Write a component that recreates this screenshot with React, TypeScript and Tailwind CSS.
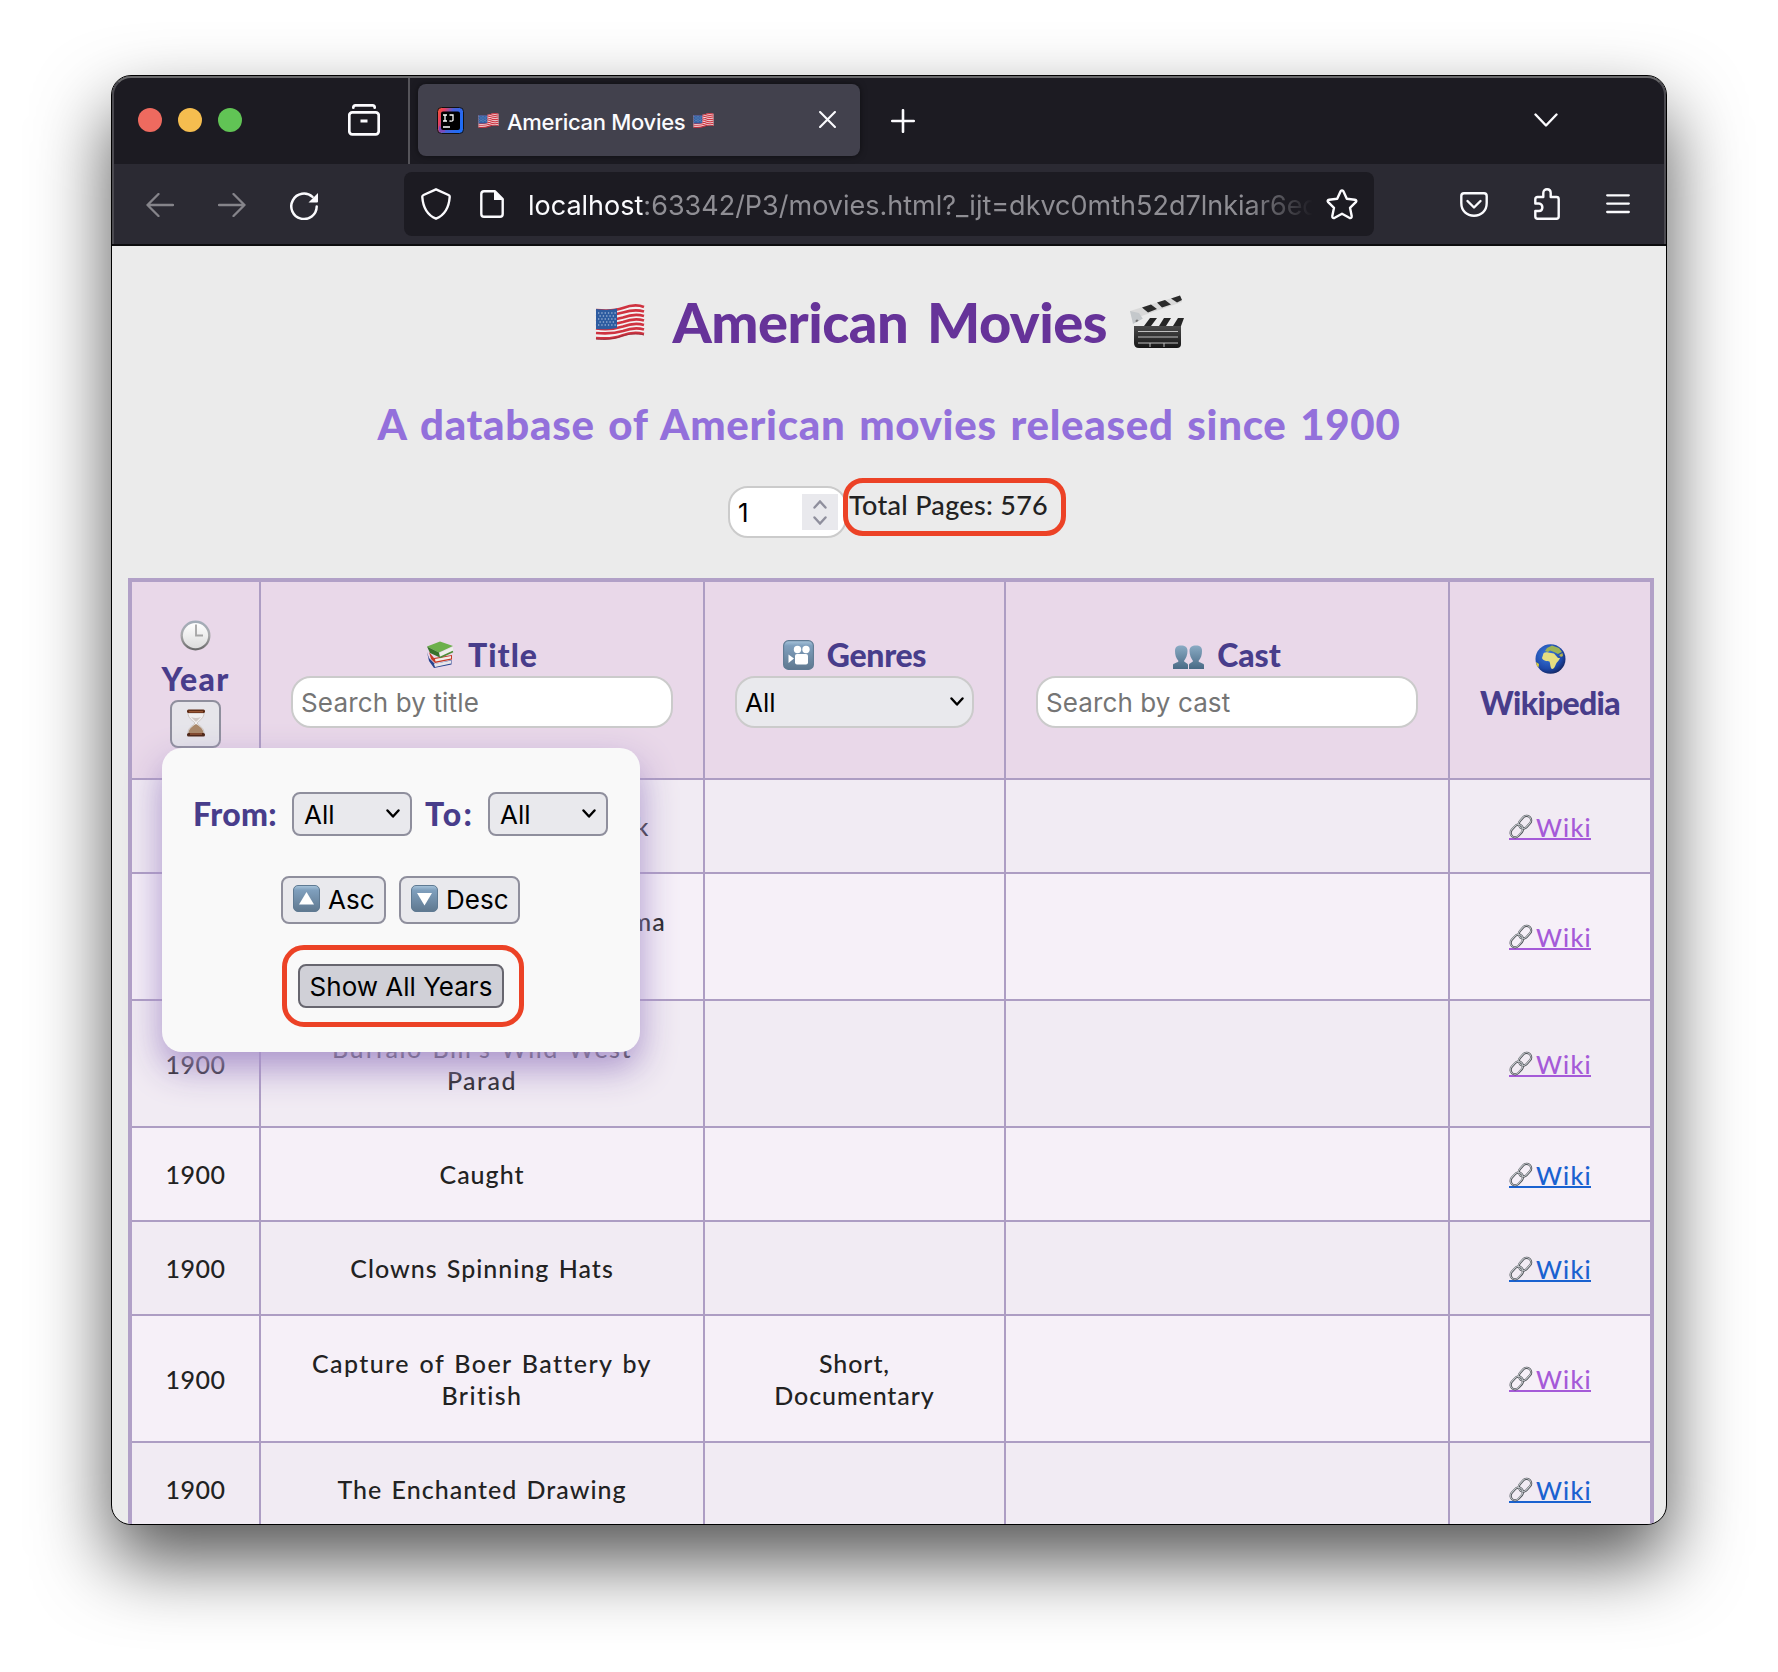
import React from "react";

function Flag({ className }: { className: string }) {
  return (
    <svg viewBox="0 0 50 36" className={className}>
      <path d="M1 5C12 6 20 6 28 3C36 0 44 0 49 2V31C42 29 34 30 27 32C19 35 10 36 1 35Z" fill="#f4f1f2" />
      <g fill="none" stroke="#cf3340" strokeWidth="2.7">
        <path d="M1 6C12 7 20 7 28 4C36 1 44 1 49 3" />
        <path d="M1 11C12 12 20 11 28 8.500C36 6 44 6 49 7.500" />
        <path d="M1 15.500C12 17 20 16 28 13.500C36 10.500 44 10.500 49 12" />
        <path d="M1 20C12 21.500 20 20.500 28 18C36 15 44 15 49 16.500" />
        <path d="M1 24.500C12 26 20 25 28 22.500C36 19.500 44 19.500 49 21" />
        <path d="M1 29C12 30 20 29.500 28 27C36 24 44 24 49 25.500" />
        <path d="M1 34C12 35 20 34.500 27 31.500C35 28.500 43 28.500 49 30" />
      </g>
      <path d="M1 5C9 6 16 6 22 4.500V24C15 25.500 8 25.500 1 25Z" fill="#2d5ca0" />
      <path d="M3 9H21M4.500 12H21M3 15H21M4.500 18H21M3 21H21" stroke="#c9d8ec" strokeWidth="1.200" strokeDasharray="1.300 2" />
      <path d="M1 35C10 36 19 35 27 32C34 30 42 29 49 31" fill="none" stroke="#8d2836" strokeWidth="0.800" />
    </svg>
  );
}

function Clapper() {
  return (
    <svg viewBox="0 0 54 54" className="w-[54px] h-[54px]">
      <defs>
        <linearGradient id="slate" x1="0" y1="0" x2="0" y2="1">
          <stop offset="0" stopColor="#4a4a4a" />
          <stop offset="1" stopColor="#161616" />
        </linearGradient>
      </defs>
      <path d="M0 16L50 0.500L52 7L3 24Z" fill="#d9d9d9" />
      <path d="M12 12.500L21 9.500L27 14L18 17.500ZM27 7.500L35 5L41 9.500L32 12.500ZM41 3.500L50 0.500L52 5L47 7.500Z" fill="#2b2b2b" />
      <path d="M0 16L3 29L15 27L9 18Z" fill="#c4c8cb" />
      <circle cx="7" cy="26" r="1.500" fill="#777" />
      <path d="M3 29L14 23H54L51 31H4Z" fill="#ececec" />
      <path d="M20 23H27L21 31H14ZM34 23H41L36 31H29ZM48 23H54L51 31H43Z" fill="#262626" />
      <path d="M4 31H51V49Q51 53 47 53H9Q4 53 4 48Z" fill="url(#slate)" />
      <path d="M8 36.500H48M8 42H48M8 48H48M20 48V52M34 48V52" stroke="#bdbdbd" strokeWidth="1" fill="none" />
    </svg>
  );
}

function Clock() {
  return (
    <svg viewBox="0 0 31 31" className="w-[31px] h-[31px]">
      <defs>
        <linearGradient id="rim" x1="0" y1="0" x2="0" y2="1">
          <stop offset="0" stopColor="#a3adba" />
          <stop offset="0.500" stopColor="#a9a9ab" />
          <stop offset="1" stopColor="#666" />
        </linearGradient>
        <linearGradient id="face" x1="0" y1="0" x2="0" y2="1">
          <stop offset="0" stopColor="#fff" />
          <stop offset="1" stopColor="#dcdcdc" />
        </linearGradient>
      </defs>
      <circle cx="15.500" cy="15.500" r="15" fill="url(#rim)" />
      <circle cx="15.500" cy="15.700" r="12.600" fill="url(#face)" />
      <path d="M16 4.500V15.500H23" fill="none" stroke="#a5a5a5" strokeWidth="1.800" />
    </svg>
  );
}

function Hourglass() {
  return (
    <svg viewBox="0 0 20 28" className="w-[20px] h-[28px]">
      <path d="M2 4H18C18 9 14 11 11.500 13.500V15C14 17 18 19 18 24H2C2 19 6 17 8.500 15V13.500C6 11 2 9 2 4Z" fill="#f1efef" stroke="#c3bcb8" strokeWidth="0.800" />
      <path d="M10 15C13 17 17 19 17.500 24H2.500C3 19 7 17 10 15Z" fill="#a98768" />
      <path d="M5 8Q10 10 15 8L10.500 12.500H9.500Z" fill="#d0c8c4" />
      <rect x="1" y="0.500" width="18" height="3.500" rx="1.500" fill="#5d2c16" />
      <path d="M3 2.800H17" stroke="#b36a42" strokeWidth="1" />
      <rect x="1" y="24" width="18" height="3.500" rx="1.500" fill="#4c2413" />
      <path d="M4 25H16" stroke="#b36a42" strokeWidth="1" />
    </svg>
  );
}

function Books() {
  return (
    <svg viewBox="0 0 28 28" className="w-[28px] h-[28px]">
      <path d="M1 11L3 20L8 27L25.500 23.500V19L9 23L3 17Z" fill="#28448f" />
      <path d="M8 23L25 19.500V22.500L9 26Z" fill="#e6e6ea" />
      <path d="M3 11L5 18L9 22L26 18.500V14L8 17Z" fill="#c43a26" />
      <path d="M9 18L25 15V17.500L9.500 20.500Z" fill="#f1ece8" />
      <path d="M1 5.500L14 0.500L27 5L13 11.500Z" fill="#6cb04b" />
      <path d="M1 5.500L13 11.500L14 16.500L4 12Z" fill="#37722a" />
      <path d="M13.500 12L27 6V10L14.500 16Z" fill="#eef0ea" />
      <path d="M14 16.500L27 10.500" stroke="#4d8c38" strokeWidth="1.500" />
    </svg>
  );
}

function TileDefs() {
  return (
    <svg className="absolute w-0 h-0">
      <defs>
        <linearGradient id="tile" x1="0" y1="0" x2="0" y2="1">
          <stop offset="0" stopColor="#a9c6dc" />
          <stop offset="0.180" stopColor="#7f9fbd" />
          <stop offset="1" stopColor="#5f788f" />
        </linearGradient>
        <linearGradient id="bust" x1="0" y1="0" x2="0" y2="1">
          <stop offset="0" stopColor="#8aabc4" />
          <stop offset="1" stopColor="#496a85" />
        </linearGradient>
        <radialGradient id="sea" cx="0.400" cy="0.350" r="0.700">
          <stop offset="0" stopColor="#3c7be0" />
          <stop offset="0.700" stopColor="#1d48a8" />
          <stop offset="1" stopColor="#14245c" />
        </radialGradient>
      </defs>
    </svg>
  );
}

function Cinema() {
  return (
    <svg viewBox="0 0 31 30" className="w-[31px] h-[30px]">
      <rect x="0.600" y="0.600" width="29.800" height="28.800" rx="5" fill="url(#tile)" stroke="#5f7a93" strokeWidth="1.100" />
      <circle cx="14.500" cy="9.500" r="3.700" fill="#fff" />
      <circle cx="23" cy="9.500" r="3.700" fill="#fff" />
      <rect x="12" y="14" width="13" height="10.500" rx="2" fill="#fff" />
      <path d="M5.500 14.500L11 18.500L5.500 23Z" fill="#fff" />
    </svg>
  );
}

function Busts() {
  return (
    <svg viewBox="0 0 31 24" className="w-[31px] h-[24px]">
      <path d="M0 24V20C0 18 5 18 5.500 16C3 13 2 10 2 6C2 2 4 0.500 8 0.500C12 0.500 14.500 2 14.500 6C14.500 10 13 13 11 16C12 18 15 18 15 20V24Z" fill="url(#bust)" />
      <path d="M31 24V20C31 18 26 18 25.500 16C28 13 29 10 29 6C29 2 27 0.500 23 0.500C19 0.500 16.500 2 16.500 6C16.500 10 18 13 20 16C19 18 16 18 16 20V24Z" fill="url(#bust)" />
    </svg>
  );
}

function Globe() {
  return (
    <svg viewBox="0 0 31 30" className="w-[31px] h-[30px]">
      <ellipse cx="15.500" cy="15" rx="15" ry="14.700" fill="url(#sea)" />
      <path d="M8 11C8 8.500 11 8 13 8.500L19 9.500L23 14H25C24 17 21.500 18 21 20C20 23 18.500 25 17 25C15 24 15.500 20 14.500 17.500C12 17 8 17 7 14Z" fill="#e6de80" />
      <path d="M10 7L12 4L17 1.500L24 4L27 8L23 10L19 8L15 6.500L13 8Z" fill="#9db356" />
      <path d="M1 18L4 20L3.500 23.500L1.800 21.500Z" fill="#d8cb3a" />
      <path d="M24 11L27.500 9L28 12L26 13Z" fill="#b6b14c" />
    </svg>
  );
}

function Chain() {
  return (
    <svg viewBox="0 0 24 25" className="w-[24px] h-[25px]">
      <g fill="none" strokeLinecap="round">
        <rect x="-4.500" y="-7" width="9" height="14" rx="4.500" transform="translate(7.800 17) rotate(42)" stroke="#4b4f54" strokeWidth="2.200" />
        <rect x="-4.500" y="-7" width="9" height="14" rx="4.500" transform="translate(16 8.200) rotate(42)" stroke="#4b4f54" strokeWidth="2.200" />
        <rect x="-4.500" y="-7" width="9" height="14" rx="4.500" transform="translate(7.600 16.800) rotate(42)" stroke="#c8ccd0" strokeWidth="1" />
        <rect x="-4.500" y="-7" width="9" height="14" rx="4.500" transform="translate(15.800 8) rotate(42)" stroke="#c8ccd0" strokeWidth="1" />
      </g>
    </svg>
  );
}

function ArrowTile({ down = false }: { down?: boolean }) {
  return (
    <svg viewBox="0 0 27 27" className="w-[27px] h-[27px] mb-[3px]">
      <rect x="0.500" y="0.500" width="26" height="26" rx="4.500" fill="url(#tile)" stroke="#5f7a93" />
      <path d={down ? "M6 8H21L13.500 20.500Z" : "M6 19.500H21L13.500 7Z"} fill="#fff" />
    </svg>
  );
}

function Chevron() {
  return (
    <svg viewBox="0 0 14 10" className="w-[14px] h-[10px]">
      <path d="M1.500 1.500L7 7.500L12.500 1.500" fill="none" stroke="#000" strokeWidth="2.400" strokeLinecap="round" strokeLinejoin="round" />
    </svg>
  );
}

function TabBar() {
  return (
    <div className="flex items-center h-[88px] bg-[#1c1b22]">
      <div className="flex gap-4 ml-[26px]">
        <div className="size-6 rounded-full bg-[#ee6a5f]" />
        <div className="size-6 rounded-full bg-[#f5bd4f]" />
        <div className="size-6 rounded-full bg-[#61c455]" />
      </div>
      <svg viewBox="0 0 32 32" className="w-[32px] h-[32px] ml-[106px]" fill="none" stroke="#fbfbfe" strokeWidth="2.700" strokeLinecap="round">
        <path d="M5.300 3.700C5.300 2.300 6 1.400 7.500 1.400H24.500C26 1.400 26.700 2.300 26.700 3.700" />
        <rect x="1.300" y="8.300" width="29.400" height="22" rx="3" />
        <path d="M12.500 17H19.500" strokeWidth="3" strokeLinecap="butt" />
      </svg>
      <div className="w-[2px] h-[88px] bg-[#55545a] ml-[28px]" />
      <div className="flex items-center w-[442px] h-[72px] ml-2 rounded-lg bg-[#42414d] shadow-[0_0_6px_rgba(0,0,0,0.5)]">
        <svg viewBox="0 0 27 27" className="w-[27px] h-[27px] ml-[19px]">
          <defs>
            <linearGradient id="ij" x1="0" y1="0" x2="1" y2="0.400">
              <stop offset="0" stopColor="#f9592f" />
              <stop offset="0.250" stopColor="#e8405f" />
              <stop offset="0.550" stopColor="#4b5fd6" />
              <stop offset="1" stopColor="#1f6cf5" />
            </linearGradient>
          </defs>
          <rect x="0.500" y="0.500" width="26" height="26" rx="4" fill="url(#ij)" stroke="#111" />
          <path d="M2 19L8 23V25H4Q2 25 2 22Z" fill="#7a4ab8" />
          <rect x="4" y="4.500" width="19" height="18.500" rx="2" fill="#000" />
          <path d="M6 8H10M8 8V14M6 14H10M12.500 8H16V13Q16 14.500 12.500 14M6 20H13" stroke="#fff" strokeWidth="1.300" fill="none" />
        </svg>
        <Flag className="w-[21px] h-[15px] ml-[14px]" />
        <span className="font-['Inter'] font-medium text-[22px] leading-7 tracking-[-0.3px] text-[#fbfbfe] w-[178px] ml-[8px] mt-[3px] whitespace-nowrap">American Movies</span>
        <Flag className="w-[21px] h-[15px] ml-[8px]" />
        <svg viewBox="0 0 16 16" className="w-[17px] h-[17px] ml-[105px] mb-[1px]">
          <path d="M1 1L15 15M15 1L1 15" stroke="#fbfbfe" strokeWidth="2" strokeLinecap="round" />
        </svg>
      </div>
      <svg viewBox="0 0 24 24" className="w-[24px] h-[24px] ml-[31px] mt-[2px]">
        <path d="M1.200 12H22.800M12 1.200V22.800" stroke="#fbfbfe" strokeWidth="2.600" strokeLinecap="round" />
      </svg>
      <svg viewBox="0 0 24 14" className="w-[24px] h-[14px] ml-[619px] mb-[1px]">
        <path d="M1.500 1.500L12 12.500L22.500 1.500" fill="none" stroke="#fbfbfe" strokeWidth="2.400" strokeLinecap="round" strokeLinejoin="round" />
      </svg>
    </div>
  );
}

function NavBar() {
  return (
    <div className="flex items-center h-[82px] bg-[#2b2a33] border-b-2 border-[#0c0c0e]">
      <svg viewBox="0 0 28 24" className="w-[28px] h-[24px] ml-[34px] mt-[2px]" fill="none" stroke="#85848a" strokeWidth="2.300" strokeLinecap="round" strokeLinejoin="round">
        <path d="M27 12H1.500M12.500 1L1.500 12L12.500 23" />
      </svg>
      <svg viewBox="0 0 28 24" className="w-[28px] h-[24px] ml-[44px] mt-[2px]" fill="none" stroke="#85848a" strokeWidth="2.300" strokeLinecap="round" strokeLinejoin="round">
        <path d="M1 12H26.500M15.500 1L26.500 12L15.500 23" />
      </svg>
      <svg viewBox="0 0 28 28" className="w-[28px] h-[28px] ml-[44px] mt-[3px]">
        <path d="M26.700 14.500A12.700 12.700 0 1 1 22.500 4.900" fill="none" stroke="#fbfbfe" strokeWidth="2.500" strokeLinecap="round" />
        <path d="M28 1V9.500Q28 10.500 27 10.500H18.500Z" fill="#fbfbfe" />
      </svg>
      <div className="flex items-center w-[970px] h-[64px] ml-[86px] pl-[17px] rounded-lg bg-[#1c1b22]">
        <svg viewBox="0 0 30 32" className="w-[30px] h-[32px]" fill="none" stroke="#fbfbfe" strokeWidth="2.400" strokeLinejoin="round">
          <path d="M15 1.300L27.500 7C28.400 7.400 28.800 8 28.700 9C28 19 24 27 15 30.700C6 27 2 19 1.300 9C1.200 8 1.600 7.400 2.500 7Z" />
        </svg>
        <svg viewBox="0 0 24 28" className="w-[24px] h-[28px] ml-[29px]">
          <path d="M15 1.300H4Q1.300 1.300 1.300 4V24Q1.300 26.700 4 26.700H20Q22.700 26.700 22.700 24V9Z" fill="none" stroke="#fbfbfe" strokeWidth="2.400" strokeLinejoin="round" />
          <path d="M14 1V10H23.500Z" fill="#fbfbfe" />
        </svg>
        <div className="w-[785px] ml-[24px] mr-[1px] mt-[3px] overflow-hidden whitespace-nowrap font-['Inter'] text-[27px] leading-9 text-[#8f8e94] [mask-image:linear-gradient(to_right,black_720px,transparent_785px)]">
          <span className="text-[#fbfbfe]">localhost</span>:63342/P3/movies.html?_ijt=dkvc0mth52d7lnkiar6ed
        </div>
        <svg viewBox="0 0 32 31" className="w-[32px] h-[31px] ml-[12px]" fill="none" stroke="#fbfbfe" strokeWidth="2.400" strokeLinejoin="round">
          <path d="M14.600 2.200Q16 0.500 17.400 2.200L20.800 9.800L28.800 10.700Q31.300 11.200 29.800 13.200L24 18.800L25.700 27Q25.800 29.800 23.300 28.800L16 24.800L8.700 28.800Q6.200 29.800 6.300 27L8 18.800L2.200 13.200Q0.700 11.200 3.200 10.700L11.200 9.800Z" />
        </svg>
      </div>
      <svg viewBox="0 0 28 25" className="w-[28px] h-[25px] ml-[86px]" fill="none" stroke="#fbfbfe" strokeWidth="2.400" strokeLinecap="round" strokeLinejoin="round">
        <path d="M4 1.300H24Q26.700 1.300 26.700 4V11C26.700 19 21 23.700 14 23.700C7 23.700 1.300 19 1.300 11V4Q1.300 1.300 4 1.300Z" />
        <path d="M7.500 9L14 15.500L20.500 9" />
      </svg>
      <svg viewBox="0 0 26 32" className="w-[26px] h-[32px] ml-[46px]" fill="none" stroke="#fbfbfe" strokeWidth="2.400" strokeLinejoin="round">
        <path d="M9.300 9V5C9.300 0 16.700 0 16.700 5V9H22.500Q24.700 9 24.700 11.200V28.500Q24.700 30.700 22.500 30.700H3.500Q1.300 30.700 1.300 28.500V23H5C9.500 23 9.500 15.500 5 15.500H1.300V11.200Q1.300 9 3.500 9Z" />
      </svg>
      <svg viewBox="0 0 24 20" className="w-[24px] h-[20px] ml-[46px]" stroke="#fbfbfe" strokeWidth="2.300" strokeLinecap="round">
        <path d="M1.200 1.300H22.800M1.200 9.600H22.800M1.200 18H22.800" />
      </svg>
    </div>
  );
}

type Row = { title: string[]; genres?: string[]; visited: boolean; tall?: boolean; spacing?: string };

const rows: Row[] = [
  { title: ["After Dark in Central Park"], visited: true, spacing: "tracking-[1.7px]" },
  { title: ["Boarding School Girls' Pajama", "Parade"], visited: true, tall: true, spacing: "tracking-[1.25px]" },
  { title: ["Buffalo Bill's Wild West", "Parad"], visited: true, tall: true, spacing: "tracking-[1.5px]" },
  { title: ["Caught"], visited: false },
  { title: ["Clowns Spinning Hats"], visited: false },
  { title: ["Capture of Boer Battery by", "British"], genres: ["Short,", "Documentary"], visited: true, tall: true, spacing: "tracking-[1.4px]" },
  { title: ["The Enchanted Drawing"], visited: false },
];

const columns = "grid grid-cols-[129px_444px_301px_444px_200px]";
const cell = "flex flex-col items-center justify-center border-b-2 border-[#ad9dc3] whitespace-nowrap";
const field = "flex items-center h-[52px] rounded-[20px] border-2 border-[#cbcbcb] font-['Inter'] text-[26px] font-normal";
const heading = "font-['Lato'] font-black text-[32px] leading-[38px] text-[#483d8b]";
const control = "flex items-center rounded-lg border-2 border-[#8f8f9d] bg-[#e9e9ed] font-['Inter'] text-[26px] text-black whitespace-nowrap";

function HeaderRow() {
  return (
    <div className={`${columns} h-[198px] bg-[#e9d8e9]`}>
      <div className="flex flex-col items-center border-r-2 border-b-2 border-[#ad9dc3] pt-[38px]">
        <Clock />
        <div className={`${heading} mt-[9px] tracking-[1.3px]`}>Year</div>
        <div className="flex justify-center w-[51px] h-[48px] mt-[2px] pt-[7px] rounded-lg border-2 border-[#8f8f9d] bg-[#e6e5ea]">
          <Hourglass />
        </div>
      </div>
      <div className="flex flex-col items-center border-r-2 border-b-2 border-[#ad9dc3] pt-[54px]">
        <div className="flex items-center h-[38px]">
          <Books />
          <span className={`${heading} ml-[14px] tracking-[1px]`}>Title</span>
        </div>
        <div className={`${field} w-[382px] mt-[2px] pl-[8px] bg-white text-[#757575] tracking-[0.15px]`}>Search by title</div>
      </div>
      <div className="flex flex-col items-center border-r-2 border-b-2 border-[#ad9dc3] pt-[54px]">
        <div className="flex items-center h-[38px]">
          <Cinema />
          <span className={`${heading} ml-[13px] tracking-[-0.3px]`}>Genres</span>
        </div>
        <div className={`${field} justify-between w-[239px] mt-[2px] pl-[8px] pr-[8px] bg-[#e9e9ed] text-black`}>
          All
          <Chevron />
        </div>
      </div>
      <div className="flex flex-col items-center border-r-2 border-b-2 border-[#ad9dc3] pt-[54px]">
        <div className="flex items-center h-[38px]">
          <div className="mt-[4px]"><Busts /></div>
          <span className={`${heading} ml-[13px]`}>Cast</span>
        </div>
        <div className={`${field} w-[382px] mt-[2px] pl-[8px] bg-white text-[#757575] tracking-[0.1px]`}>Search by cast</div>
      </div>
      <div className="flex flex-col items-center border-b-2 border-[#ad9dc3] pt-[62px]">
        <Globe />
        <div className={`${heading} mt-[10px] tracking-[-0.7px]`}>Wikipedia</div>
      </div>
    </div>
  );
}

function MovieRow({ row, odd }: { row: Row; odd: boolean }) {
  return (
    <div className={`${columns} ${row.tall ? "h-[127px]" : "h-[94px]"} ${odd ? "bg-[#f1ebf3]" : "bg-[#f6f0f8]"} font-['Lato'] text-[25px] font-medium leading-8 [word-spacing:2px] text-[#222]`}>
      <div className={`${cell} border-r-2 tracking-[0.5px]`}>1900</div>
      <div className={`${cell} border-r-2 ${row.spacing ?? "tracking-[1px]"}`}>
        {row.title.map((line) => <div key={line}>{line}</div>)}
      </div>
      <div className={`${cell} border-r-2 tracking-[0.9px]`}>
        {row.genres?.map((line) => <div key={line}>{line}</div>)}
      </div>
      <div className={`${cell} border-r-2`} />
      <div className={cell}>
        <div className={`flex h-[29px] border-b-2 ${row.tall ? "mt-[-3px]" : "mt-[-1px]"} ${row.visited ? "text-[#a55ad8] border-[#a55ad8]" : "text-[#1a62d0] border-[#1a62d0]"}`}>
          <div className="pt-[3px]"><Chain /></div>
          <span className="ml-[3px] w-[55px] tracking-[1.2px]">Wiki</span>
        </div>
      </div>
    </div>
  );
}

function YearPopup() {
  return (
    <div className="absolute left-[50px] top-[502px] w-[478px] h-[304px] rounded-[20px] bg-[#f9f9f9] shadow-[0_16px_36px_rgba(165,142,200,0.95)]">
      <div className="flex items-center h-[44px] mt-[44px] pl-[31px]">
        <span className={`${heading} w-[99px] tracking-[0.3px]`}>From:</span>
        <div className={`${control} justify-between w-[120px] h-[44px] pl-[10px] pr-[10px]`}>All<Chevron /></div>
        <span className={`${heading} w-[62px] pl-[13px] tracking-[2.2px]`}>To:</span>
        <div className={`${control} justify-between w-[120px] h-[44px] ml-[14px] pl-[10px] pr-[10px]`}>All<Chevron /></div>
      </div>
      <div className="flex mt-[40px] pl-[119px] gap-[13px]">
        <div className={`${control} w-[105px] h-[48px] pl-[10px] gap-[8px]`}><ArrowTile /><span className="mb-[1px]">Asc</span></div>
        <div className={`${control} w-[121px] h-[48px] pl-[10px] gap-[8px]`}><ArrowTile down /><span className="mb-[1px]">Desc</span></div>
      </div>
      <div className="flex items-center justify-center w-[206px] h-[44px] mt-[40px] ml-[136px] rounded-lg border-2 border-[#67666f] bg-[#d0d0d7] font-['Inter'] text-[26px] text-black whitespace-nowrap">
        Show All Years
      </div>
      <div className="absolute left-[120px] top-[197px] w-[242px] h-[82px] rounded-[22px] border-[5px] border-[#ec4226]" />
    </div>
  );
}

export default function App() {
  return (
    <div className="w-[1778px] h-[1672px] overflow-hidden bg-white pt-[75px] pl-[111px]">
      <div className="relative w-[1556px] h-[1450px] rounded-[20px] border border-black bg-[#ebebeb] overflow-hidden shadow-[0_36px_74px_rgba(0,0,0,0.67)]">
        <TileDefs />
        <TabBar />
        <NavBar />
        <div className="absolute left-0 top-0 w-full h-[168px] rounded-t-[19px] border-t-2 border-x-2 border-t-[#6a6a6c] border-x-[#4b4a50]" />
        <div className="relative h-[1278px]">
          <h1 className="flex justify-center pt-[41px]">
            <Flag className="w-[50px] h-[36px] mt-[17px]" />
            <span className="w-[433px] ml-[28px] mt-[1px] whitespace-nowrap font-['Lato'] font-black text-[56px] leading-[67px] tracking-[-0.5px] [word-spacing:6px] text-[#663399]">American Movies</span>
            <div className="ml-[24px] mt-[8px]"><Clapper /></div>
          </h1>
          <h2 className="mt-[44px] text-center whitespace-nowrap font-['Lato'] font-black text-[42px] leading-[50px] tracking-[0.7px] [word-spacing:3px] text-[#9370db]">A database of American movies released since 1900</h2>
          <div className="flex mt-[37px] ml-[616px]">
            <div className={`${field} justify-between w-[119px] pl-[8px] pr-[7px] bg-white text-black`}>
              1
              <div className="flex flex-col items-center justify-center gap-[7px] w-[36px] h-[36px] bg-[#e9e9ed]">
                <svg viewBox="0 0 14 9" className="w-[14px] h-[9px]"><path d="M1.500 7.500L7 1.500L12.500 7.500" fill="none" stroke="#8f8f9d" strokeWidth="2.400" strokeLinecap="round" /></svg>
                <svg viewBox="0 0 14 9" className="w-[14px] h-[9px]"><path d="M1.500 1.500L7 7.500L12.500 1.500" fill="none" stroke="#8f8f9d" strokeWidth="2.400" strokeLinecap="round" /></svg>
              </div>
            </div>
            <div className="ml-[2px] mt-[3px] font-['Lato'] font-medium text-[27px] leading-8 tracking-[0.3px] text-[#222] whitespace-nowrap">Total Pages: 576</div>
          </div>
          <div className="absolute left-[731px] top-[232px] w-[223px] h-[58px] rounded-[20px] border-[5px] border-[#ec4226]" />
          <div className="w-[1526px] mt-[40px] ml-[16px] border-4 border-[#b1a0c7]">
            <HeaderRow />
            {rows.map((row, i) => <MovieRow key={row.title[0]} row={row} odd={i % 2 === 0} />)}
          </div>
          <YearPopup />
        </div>
      </div>
    </div>
  );
}
